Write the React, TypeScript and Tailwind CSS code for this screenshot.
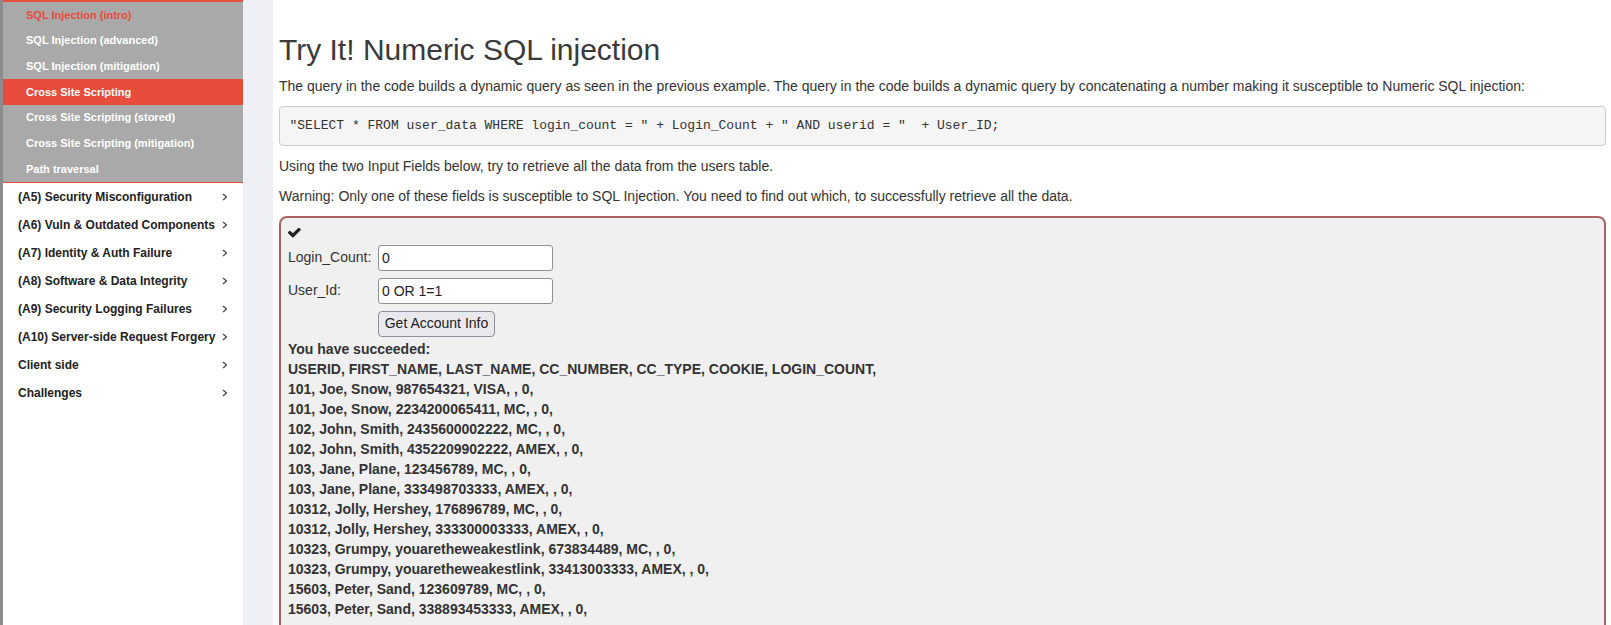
const subLessons = [
  { label: "SQL Injection (intro)", state: "current" },
  { label: "SQL Injection (advanced)", state: "" },
  { label: "SQL Injection (mitigation)", state: "" },
  { label: "Cross Site Scripting", state: "active" },
  { label: "Cross Site Scripting (stored)", state: "" },
  { label: "Cross Site Scripting (mitigation)", state: "" },
  { label: "Path traversal", state: "" },
];

const categories = [
  "(A5) Security Misconfiguration",
  "(A6) Vuln & Outdated Components",
  "(A7) Identity & Auth Failure",
  "(A8) Software & Data Integrity",
  "(A9) Security Logging Failures",
  "(A10) Server-side Request Forgery",
  "Client side",
  "Challenges",
];

const resultRows = [
  "USERID, FIRST_NAME, LAST_NAME, CC_NUMBER, CC_TYPE, COOKIE, LOGIN_COUNT,",
  "101, Joe, Snow, 987654321, VISA, , 0,",
  "101, Joe, Snow, 2234200065411, MC, , 0,",
  "102, John, Smith, 2435600002222, MC, , 0,",
  "102, John, Smith, 4352209902222, AMEX, , 0,",
  "103, Jane, Plane, 123456789, MC, , 0,",
  "103, Jane, Plane, 333498703333, AMEX, , 0,",
  "10312, Jolly, Hershey, 176896789, MC, , 0,",
  "10312, Jolly, Hershey, 333300003333, AMEX, , 0,",
  "10323, Grumpy, youaretheweakestlink, 673834489, MC, , 0,",
  "10323, Grumpy, youaretheweakestlink, 33413003333, AMEX, , 0,",
  "15603, Peter, Sand, 123609789, MC, , 0,",
  "15603, Peter, Sand, 338893453333, AMEX, , 0,",
];

const Chevron = () => (
  <svg width="6" height="8" viewBox="0 0 6 8" fill="none" className="shrink-0">
    <path d="M1 1l3.5 3L1 7" stroke="#444" strokeWidth="1.2" />
  </svg>
);

const CheckIcon = () => (
  <svg width="13" height="11" viewBox="128 480 1568 1120" fill="#222">
    <path d="M1671 566q0 40-28 68l-724 724-136 136q-28 28-68 28t-68-28l-136-136-362-362q-28-28-28-68t28-68l136-136q28-28 68-28t68 28l294 295 656-657q28-28 68-28t68 28l136 136q28 28 28 68z" />
  </svg>
);

const Sidebar = () => (
  <aside className="w-[243px] shrink-0 border-l-[3px] border-[#8c8c8c] bg-white">
    <ul className="border-t-2 border-b border-[#e74c3c] bg-[#a9a9a9]">
      {subLessons.map((item) => (
        <li
          key={item.label}
          className={
            item.state === "active"
              ? "flex h-[25.714px] items-center bg-[#e74c3c] pl-[23px] text-[11px] font-bold text-white"
              : item.state === "current"
              ? "flex h-[25.714px] items-center pl-[23px] text-[11px] font-bold text-[#e74c3c]"
              : "flex h-[25.714px] items-center pl-[23px] text-[11px] font-bold text-white"
          }
        >
          {item.label}
        </li>
      ))}
    </ul>
    <ul>
      {categories.map((name) => (
        <li key={name} className="flex h-[28px] items-center justify-between pl-[15px] pr-[15px] text-[12px] font-bold text-[#222]">
          <span>{name}</span>
          <Chevron />
        </li>
      ))}
    </ul>
  </aside>
);

const AttackForm = () => (
  <div className="min-h-[420px] rounded-[8px] border-2 border-[#a86464] bg-[#f0f0f0] pl-[7px]">
    <div className="h-[27px] pt-[10px]">
      <CheckIcon />
    </div>
    <div className="flex flex-col gap-[7px]">
      <div className="flex h-[26px] items-center">
        <label className="w-[90px] text-[14px]">Login_Count:</label>
        <input
          readOnly
          value="0"
          className="h-[26px] w-[175px] rounded-[3px] border border-[#8f8f9d] bg-white px-[3px] text-[14px] text-[#222]"
        />
      </div>
      <div className="flex h-[26px] items-center">
        <label className="w-[90px] text-[14px]">User_Id:</label>
        <input
          readOnly
          value="0 OR 1=1"
          className="h-[26px] w-[175px] rounded-[3px] border border-[#8f8f9d] bg-white px-[3px] text-[14px] text-[#222]"
        />
      </div>
      <div className="flex h-[26px] items-center pl-[90px]">
        <button className="h-[26px] w-[117px] rounded-[4px] border border-[#8f8f9d] bg-[#e9e9ed] text-[14px] text-[#222]">
          Get Account Info
        </button>
      </div>
    </div>
    <div className="mt-[2px] text-[14px] font-bold leading-[20px]">
      <p>You have succeeded:</p>
      {resultRows.map((row) => (
        <p key={row}>{row}</p>
      ))}
    </div>
  </div>
);

export default function App() {
  return (
    <div className="flex h-[625px] overflow-hidden bg-white font-['Liberation_Sans',Arial,sans-serif] text-[#333]">
      <Sidebar />
      <div className="w-[30px] shrink-0 bg-[#eff0f5]" />
      <main className="min-w-0 flex-1 pl-[6px] pr-[5px] pt-[33px]">
        <h2 className="mb-[10px] text-[30px] font-normal leading-[33px] text-[#3a3a3a]">Try It! Numeric SQL injection</h2>
        <p className="mb-[10px] text-[14px] leading-[20px]">
          The query in the code builds a dynamic query as seen in the previous example. The query in the code builds a
          dynamic query by concatenating a number making it susceptible to Numeric SQL injection:
        </p>
        <pre className="mb-[10px] whitespace-pre rounded-[4px] border border-[#ccc] bg-[#f5f5f5] p-[9.5px] font-['Liberation_Mono',monospace] text-[13px] leading-[18.6px] text-[#333]">
          {'"SELECT * FROM user_data WHERE login_count = " + Login_Count + " AND userid = "  + User_ID;'}
        </pre>
        <p className="mb-[10px] text-[14px] leading-[20px]">
          Using the two Input Fields below, try to retrieve all the data from the users table.
        </p>
        <p className="mb-[10px] text-[14px] leading-[20px]">
          Warning: Only one of these fields is susceptible to SQL Injection. You need to find out which, to successfully
          retrieve all the data.
        </p>
        <AttackForm />
      </main>
    </div>
  );
}
